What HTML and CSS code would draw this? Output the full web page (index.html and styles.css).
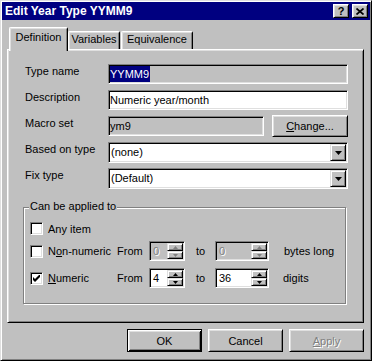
FILE: index.html
```html
<!DOCTYPE html>
<html lang="en">
<head>
    <meta charset="UTF-8">
    <title>Edit Year Type YYMM9</title>
    <link rel="stylesheet" href="styles.css">
</head>
<body>
    <div class="window">
        <div class="titlebar">
            <span class="title">Edit Year Type YYMM9</span>
            <div class="title-buttons">
                <span class="tbtn">?</span>
                <span class="tbtn">
                    <svg width="8" height="7" viewBox="0 0 8 7"><path d="M0.5 0.5 L7.5 6.5 M7.5 0.5 L0.5 6.5" stroke="#000" stroke-width="1.7" fill="none"/></svg>
                </span>
            </div>
        </div>

        <div class="tabs">
            <div class="tab active">Definition</div>
            <div class="tab">Variables</div>
            <div class="tab tab-last">Equivalence</div>
        </div>

        <div class="panel">
            <div class="row">
                <label>Type name</label>
                <div class="field readonly"><span class="sel">YYMM9</span></div>
            </div>
            <div class="row">
                <label>Description</label>
                <div class="field">Numeric year/month</div>
            </div>
            <div class="row">
                <label>Macro set</label>
                <div class="field readonly short">ym9</div>
                <button class="btn change"><u>C</u>hange...</button>
            </div>
            <div class="row">
                <label>Based on type</label>
                <div class="combo">
                    <span class="combo-value">(none)</span>
                    <span class="drop"><svg width="7" height="4" viewBox="0 0 7 4"><path d="M0 0 H7 L3.5 4 Z" fill="#000"/></svg></span>
                </div>
            </div>
            <div class="row last">
                <label>Fix type</label>
                <div class="combo">
                    <span class="combo-value">(Default)</span>
                    <span class="drop"><svg width="7" height="4" viewBox="0 0 7 4"><path d="M0 0 H7 L3.5 4 Z" fill="#000"/></svg></span>
                </div>
            </div>

            <div class="group">
                <span class="group-title">Can be applied to</span>

                <div class="opt-row first">
                    <div class="check-cell">
                        <span class="checkbox"></span>
                        <span>Any item</span>
                    </div>
                </div>

                <div class="opt-row second">
                    <div class="check-cell">
                        <span class="checkbox"></span>
                        <span>N<u>o</u>n-numeric</span>
                    </div>
                    <span class="from">From</span>
                    <div class="spin disabled">
                        <span class="spin-value">0</span>
                        <span class="spin-btns">
                            <span class="spin-btn"><svg width="5" height="3" viewBox="0 0 5 3"><path d="M2.5 0 L5 3 H0 Z" fill="#808080"/></svg></span>
                            <span class="spin-btn"><svg width="5" height="3" viewBox="0 0 5 3"><path d="M0 0 H5 L2.5 3 Z" fill="#808080"/></svg></span>
                        </span>
                    </div>
                    <span class="to">to</span>
                    <div class="spin wide disabled">
                        <span class="spin-value">0</span>
                        <span class="spin-btns">
                            <span class="spin-btn"><svg width="5" height="3" viewBox="0 0 5 3"><path d="M2.5 0 L5 3 H0 Z" fill="#808080"/></svg></span>
                            <span class="spin-btn"><svg width="5" height="3" viewBox="0 0 5 3"><path d="M0 0 H5 L2.5 3 Z" fill="#808080"/></svg></span>
                        </span>
                    </div>
                    <span class="suffix">bytes long</span>
                </div>

                <div class="opt-row third">
                    <div class="check-cell">
                        <span class="checkbox"><svg width="7" height="7" viewBox="0 0 7 7"><path d="M0 2 L2 4 L7 -1 L7 2 L2 7 L0 5 Z" fill="#000"/></svg></span>
                        <span><u>N</u>umeric</span>
                    </div>
                    <span class="from">From</span>
                    <div class="spin">
                        <span class="spin-value">4</span>
                        <span class="spin-btns">
                            <span class="spin-btn"><svg width="5" height="3" viewBox="0 0 5 3"><path d="M2.5 0 L5 3 H0 Z" fill="#000"/></svg></span>
                            <span class="spin-btn"><svg width="5" height="3" viewBox="0 0 5 3"><path d="M0 0 H5 L2.5 3 Z" fill="#000"/></svg></span>
                        </span>
                    </div>
                    <span class="to">to</span>
                    <div class="spin wide">
                        <span class="spin-value">36</span>
                        <span class="spin-btns">
                            <span class="spin-btn"><svg width="5" height="3" viewBox="0 0 5 3"><path d="M2.5 0 L5 3 H0 Z" fill="#000"/></svg></span>
                            <span class="spin-btn"><svg width="5" height="3" viewBox="0 0 5 3"><path d="M0 0 H5 L2.5 3 Z" fill="#000"/></svg></span>
                        </span>
                    </div>
                    <span class="suffix digits">digits</span>
                </div>
            </div>
        </div>

        <div class="buttons">
            <button class="btn default">OK</button>
            <button class="btn">Cancel</button>
            <button class="btn disabled"><u>A</u>pply</button>
        </div>
    </div>
</body>
</html>
```

FILE: styles.css
```css
* {
    box-sizing: border-box;
}
body {
    margin: 0;
    font-family: "Liberation Sans", Arial, sans-serif;
    font-size: 11px;
    color: #000;
    background-color: #c0c0c0;
}
.window {
    width: 372px;
    height: 361px;
    padding: 1px;
    background-color: #c0c0c0;
    border: 1px solid;
    border-color: #dfdfdf #000 #000 #dfdfdf;
    box-shadow: inset 1px 1px #fff, inset -1px -1px #808080;
}
.titlebar {
    height: 18px;
    display: flex;
    align-items: center;
    justify-content: space-between;
    padding: 0 2px 0 3px;
    background-color: #000080;
    color: #fff;
}
.title {
    font-weight: bold;
    font-size: 12px;
}
.title-buttons {
    display: flex;
    gap: 3px;
}
.tbtn {
    width: 16px;
    height: 14px;
    display: flex;
    align-items: center;
    justify-content: center;
    background-color: #c0c0c0;
    color: #000;
    font-weight: bold;
    font-size: 11px;
    border: 1px solid;
    border-color: #fff #000 #000 #fff;
    box-shadow: inset 1px 1px #dfdfdf, inset -1px -1px #808080;
}

/* tabs */
.tabs {
    height: 29px;
    display: flex;
    align-items: flex-end;
    padding-left: 7px;
}
.tab {
    height: 18px;
    padding: 1px 0 0;
    text-align: center;
    background-color: #c0c0c0;
    border: 1px solid;
    border-bottom: none;
    border-color: #fff #000 #000 #fff;
    border-radius: 2px 2px 0 0;
    box-shadow: inset 1px 1px #dfdfdf, inset -1px 0 #808080;
    width: 52px;
}
.tab.active {
    width: 59px;
    height: 24px;
    margin-bottom: -2px;
    padding-top: 3px;
    position: relative;
    z-index: 1;
}
.tab-last {
    width: 72px;
    margin-left: 1px;
}

/* main panel */
.panel {
    width: 357px;
    height: 274px;
    margin-left: 5px;
    padding: 14px 0 0 17px;
    border: 1px solid;
    border-color: #fff #000 #000 #fff;
    box-shadow: inset 1px 1px #dfdfdf, inset -1px -1px #808080;
}
.row {
    display: flex;
    align-items: flex-start;
    height: 21px;
    margin-bottom: 5px;
}
.row.last {
    margin-bottom: 0;
}
.row label {
    width: 83px;
    line-height: 15px;
}
.field {
    width: 240px;
    height: 20px;
    padding: 1px 1px;
    line-height: 16px;
    white-space: nowrap;
    background-color: #fff;
    border: 1px solid;
    border-color: #808080 #fff #fff #808080;
    box-shadow: inset 1px 1px #000, inset -1px -1px #dfdfdf;
}
.field.readonly {
    background-color: #c0c0c0;
}
.field.short {
    width: 156px;
}
.sel {
    display: inline-block;
    height: 16px;
    margin-top: -1px;
    padding: 0 1px 0 0;
    background-color: #000080;
    color: #fff;
}
.combo {
    width: 240px;
    height: 21px;
    display: flex;
    padding: 1px;
    background-color: #fff;
    border: 1px solid;
    border-color: #808080 #fff #fff #808080;
    box-shadow: inset 1px 1px #000, inset -1px -1px #dfdfdf;
}
.combo-value {
    flex: 1;
    line-height: 17px;
    padding-left: 1px;
}
.drop {
    width: 16px;
    height: 17px;
    display: flex;
    align-items: center;
    justify-content: center;
    background-color: #c0c0c0;
    border: 1px solid;
    border-color: #dfdfdf #000 #000 #dfdfdf;
    box-shadow: inset 1px 1px #fff, inset -1px -1px #808080;
}

/* buttons */
.btn {
    width: 75px;
    height: 23px;
    padding: 0;
    font-family: inherit;
    font-size: 11px;
    color: #000;
    background-color: #c0c0c0;
    border: 1px solid;
    border-color: #fff #000 #000 #fff;
    box-shadow: inset 1px 1px #dfdfdf, inset -1px -1px #808080;
}
.btn.change {
    width: 76px;
    height: 22px;
    margin-left: 8px;
    margin-top: -1px;
}
.btn.default {
    border: 1px solid #000;
    box-shadow: inset 1px 1px #fff, inset -1px -1px #000, inset 2px 2px #dfdfdf, inset -2px -2px #808080;
}
.btn.disabled {
    color: #808080;
    text-shadow: 1px 1px #fff;
}
.buttons {
    display: flex;
    justify-content: flex-end;
    gap: 6px;
    margin-top: 6px;
    padding-right: 6px;
}

/* group box */
.group {
    position: relative;
    width: 323px;
    height: 97px;
    margin: 18px 0 0 -2px;
    padding: 12px 0 0 6px;
    border: 1px solid #808080;
    box-shadow: inset 1px 1px #fff, 1px 1px #fff;
}
.group-title {
    position: absolute;
    top: -8px;
    left: 5px;
    padding: 0 1px;
    line-height: 13px;
    background-color: #c0c0c0;
}
.opt-row {
    display: flex;
    align-items: center;
    height: 20px;
}
.opt-row.first {
    height: 17px;
}
.opt-row.second {
    margin-top: 4px;
}
.opt-row.third {
    margin-top: 7px;
}
.check-cell {
    width: 87px;
    display: flex;
    align-items: center;
    gap: 5px;
}
.checkbox {
    width: 13px;
    height: 13px;
    display: flex;
    align-items: center;
    justify-content: center;
    background-color: #fff;
    border: 1px solid;
    border-color: #808080 #fff #fff #808080;
    box-shadow: inset 1px 1px #000, inset -1px -1px #dfdfdf;
}
.from {
    width: 32px;
}
.to {
    width: 19px;
    margin-left: 11px;
}
.suffix {
    margin-left: 15px;
}
.suffix.digits {
    margin-left: 14px;
}
.spin {
    width: 36px;
    height: 20px;
    display: flex;
    padding: 1px;
    background-color: #fff;
    border: 1px solid;
    border-color: #808080 #fff #fff #808080;
    box-shadow: inset 1px 1px #000, inset -1px -1px #dfdfdf;
}
.spin.wide {
    width: 54px;
}
.spin.disabled {
    background-color: #c0c0c0;
    color: #808080;
}
.spin.disabled .spin-value {
    text-shadow: 1px 1px #fff;
}
.spin-value {
    flex: 1;
    line-height: 16px;
    padding-left: 2px;
}
.spin-btns {
    width: 16px;
    display: flex;
    flex-direction: column;
}
.spin-btn {
    height: 8px;
    display: flex;
    align-items: center;
    justify-content: center;
    background-color: #c0c0c0;
    border: 1px solid;
    border-color: #dfdfdf #000 #000 #dfdfdf;
    box-shadow: inset 1px 1px #fff, inset -1px -1px #808080;
}
```
